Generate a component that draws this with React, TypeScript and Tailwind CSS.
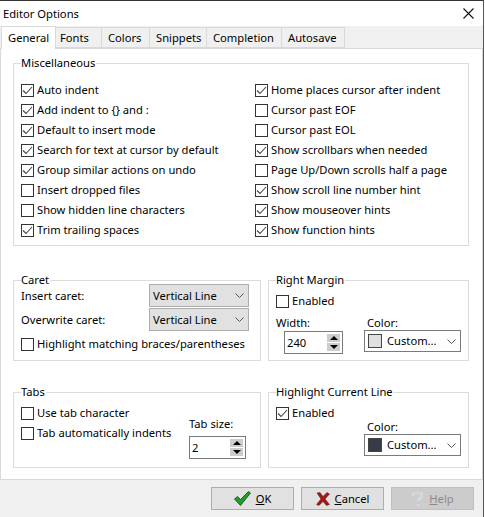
const FONT = "font-['Noto_Sans',sans-serif]";

function Box({ checked }: { checked?: boolean }) {
  return (
    <span className="w-[13px] h-[13px] border border-[#333] bg-white shrink-0 flex items-center justify-center">
      {checked && (
        <svg width="11" height="11" viewBox="0 0 11 11" fill="none">
          <path d="M1 5.5 L4 8.5 L10 2" stroke="#444" strokeWidth="1.1" />
        </svg>
      )}
    </span>
  );
}

function Check({ label, checked }: { label: string; checked?: boolean }) {
  return (
    <div className="flex items-center gap-[3px] h-[20px] whitespace-nowrap">
      <Box checked={checked} />
      <span>{label}</span>
    </div>
  );
}

function Group({ title, className, children }: { title: string; className: string; children?: React.ReactNode }) {
  return (
    <fieldset className={`border border-[#dcdcdc] pl-[7px] min-w-0 shrink-0 ${className}`}>
      <legend className="pr-[1px] leading-[14px] h-[14px]">{title}</legend>
      {children}
    </fieldset>
  );
}

function Chevron() {
  return (
    <svg width="9" height="5" viewBox="0 0 9 5" fill="none" className="shrink-0">
      <path d="M0.5 0.5 L4.5 4.5 L8.5 0.5" stroke="#555" strokeWidth="1" />
    </svg>
  );
}

function Combo({ label }: { label: string }) {
  return (
    <div className="w-[100px] h-[23px] bg-[#e1e1e1] border border-[#adadad] flex items-center justify-between pl-[3px] pr-[4px]">
      <span>{label}</span>
      <Chevron />
    </div>
  );
}

function ColorCombo({ color }: { color: string }) {
  return (
    <div className="w-[97px] h-[22px] bg-white border border-[#7a7a7a] flex items-center pl-[3px] pr-[4px]">
      <span className="w-[14px] h-[14px] border border-[#444] shrink-0" style={{ backgroundColor: color }} />
      <span className="ml-[5px] flex-1">Custom...</span>
      <Chevron />
    </div>
  );
}

function Spin({ value, w }: { value: string; w: string }) {
  return (
    <div className={`${w} h-[23px] bg-white border border-[#7a7a7a] flex items-center justify-between pl-[2px] pr-[2px]`}>
      <span>{value}</span>
      <div className="flex flex-col gap-[1px]">
        <span className="w-[13px] h-[8px] bg-[#cdcdcd] flex items-center justify-center">
          <span className="w-0 h-0 border-x-[4px] border-x-transparent border-b-[4px] border-b-black" />
        </span>
        <span className="w-[13px] h-[8px] bg-[#cdcdcd] flex items-center justify-center">
          <span className="w-0 h-0 border-x-[4px] border-x-transparent border-t-[4px] border-t-black" />
        </span>
      </div>
    </div>
  );
}

function Btn({ children, disabled }: { children: React.ReactNode; disabled?: boolean }) {
  return (
    <div className={`w-[83px] h-[23px] flex items-center justify-center gap-[5px] border ${disabled ? "bg-[#cccccc] border-[#bfbfbf] text-[#8c8c8c]" : "bg-[#e1e1e1] border-[#adadad]"}`}>
      {children}
    </div>
  );
}

const left = [
  ["Auto indent", true],
  ["Add indent to {} and :", true],
  ["Default to insert mode", true],
  ["Search for text at cursor by default", true],
  ["Group similar actions on undo", true],
  ["Insert dropped files", false],
  ["Show hidden line characters", false],
  ["Trim trailing spaces", true],
] as const;

const right = [
  ["Home places cursor after indent", true],
  ["Cursor past EOF", false],
  ["Cursor past EOL", false],
  ["Show scrollbars when needed", true],
  ["Page Up/Down scrolls half a page", false],
  ["Show scroll line number hint", true],
  ["Show mouseover hints", true],
  ["Show function hints", true],
] as const;

const tabs = [
  { label: "Fonts", w: "w-[46px] pl-[4px]" },
  { label: "Colors", w: "w-[48px] pl-[6px]" },
  { label: "Snippets", w: "w-[57px] pl-[6px]" },
  { label: "Completion", w: "w-[75px] pl-[6px]" },
  { label: "Autosave", w: "w-[63px] pl-[6px]" },
];

export default function App() {
  return (
    <div className={`${FONT} w-[484px] h-[517px] bg-[#f0f0f0] text-[11.2px] leading-[14px] text-black flex flex-col overflow-hidden border-t border-t-[#333] border-r border-r-[#555]`}>
      <div className="h-[25px] bg-white flex items-center justify-between pl-[3px] pr-[9px] shrink-0">
        <span>Editor Options</span>
        <svg width="11" height="11" viewBox="0 0 11 11" fill="none">
          <path d="M0.5 0.5 L10.5 10.5 M10.5 0.5 L0.5 10.5" stroke="#111" strokeWidth="1.1" />
        </svg>
      </div>
      <div className="flex h-[22px] pl-[1px] shrink-0 relative z-10">
        <div className="w-[55px] h-[23px] pl-[6px] bg-white border border-b-0 border-[#d9d9d9] flex items-center shrink-0">General</div>
        {tabs.map((t) => (
          <div key={t.label} className={`${t.w} h-[21px] mt-[1px] bg-[#f0f0f0] border border-l-0 border-[#d9d9d9] flex items-center shrink-0`}>{t.label}</div>
        ))}
      </div>
      <div className="h-[432px] bg-white border border-[#d9d9d9] pl-[12px] pt-[7px] shrink-0">
        <Group title="Miscellaneous" className="w-[456px] h-[190px]">
          <div className="flex mt-[10px]">
            <div className="w-[234px]">
              {left.map(([l, c]) => <Check key={l} label={l} checked={c} />)}
            </div>
            <div>
              {right.map(([l, c]) => <Check key={l} label={l} checked={c} />)}
            </div>
          </div>
        </Group>
        <div className="flex mt-[27px] gap-[7px]">
          <Group title="Caret" className="w-[248px] h-[88px] pr-[11px]">
            <div className="flex items-center justify-between h-[23px] -mt-[3px] mb-[1px]">
              <span>Insert caret:</span>
              <Combo label="Vertical Line" />
            </div>
            <div className="flex items-center justify-between h-[23px]">
              <span>Overwrite caret:</span>
              <Combo label="Vertical Line" />
            </div>
            <div className="mt-[3px]">
              <Check label="Highlight matching braces/parentheses" />
            </div>
          </Group>
          <Group title="Right Margin" className="w-[201px] h-[88px]">
            <div className="mt-[4px]">
              <Check label="Enabled" />
            </div>
            <div className="flex mt-[5px]">
              <div className="w-[88px]">
                <div>Width:</div>
                <div className="ml-[8px] mt-[1px]"><Spin value="240" w="w-[59px]" /></div>
              </div>
              <div>
                <div className="ml-[3px]">Color:</div>
                <ColorCombo color="#e0e0e0" />
              </div>
            </div>
          </Group>
        </div>
        <div className="flex mt-[24px] gap-[7px]">
          <Group title="Tabs" className="w-[248px] h-[83px]">
            <div className="flex mt-[4px]">
              <div className="w-[168px]">
                <Check label="Use tab character" />
                <Check label="Tab automatically indents" />
              </div>
              <div className="mt-[14px]">
                <div>Tab size:</div>
                <div className="mt-[5px]"><Spin value="2" w="w-[57px]" /></div>
              </div>
            </div>
          </Group>
          <Group title="Highlight Current Line" className="w-[201px] h-[83px]">
            <div className="mt-[4px]">
              <Check label="Enabled" checked />
            </div>
            <div className="ml-[88px] -mt-[3px]">
              <div className="ml-[3px]">Color:</div>
              <ColorCombo color="#383c48" />
            </div>
          </Group>
        </div>
      </div>
      <div className="flex justify-end gap-[7px] pr-[9px] pt-[7px]">
        <Btn>
          <svg width="17" height="15" viewBox="0 0 17 15">
            <path d="M0.5 8 L3.5 5.5 L6.5 8.5 L14.5 0.5 L16.5 2 L6.5 14.5 Z" fill="#1ea01e" stroke="#0a3d4a" strokeWidth="0.8" />
          </svg>
          <span><u>O</u>K</span>
        </Btn>
        <Btn>
          <svg width="14" height="14" viewBox="0 0 14 14">
            <path d="M1 1 L4 0.5 L7 4.5 L11 0.5 L13.5 2 L9 7 L13.5 12.5 L10.5 13.5 L7 9.5 L3 13.5 L0.5 12.5 L5 7 Z" fill="#a01818" stroke="#611" strokeWidth="0.5" />
          </svg>
          <span><u>C</u>ancel</span>
        </Btn>
        <Btn disabled>
          <svg width="13" height="16" viewBox="0 0 13 16" fill="none">
            <path d="M2 5 C2 1 11 0.5 11 4.5 C11 7.5 7 7.5 7 10.5 M7 13 L7 15.5" stroke="#eee" strokeWidth="2.2" />
            <path d="M2 5 C2 1 11 0.5 11 4.5 C11 7.5 7 7.5 7 10.5 M7 13 L7 15.5" stroke="#aaa" strokeWidth="0.7" />
          </svg>
          <span><u>H</u>elp</span>
        </Btn>
      </div>
    </div>
  );
}
